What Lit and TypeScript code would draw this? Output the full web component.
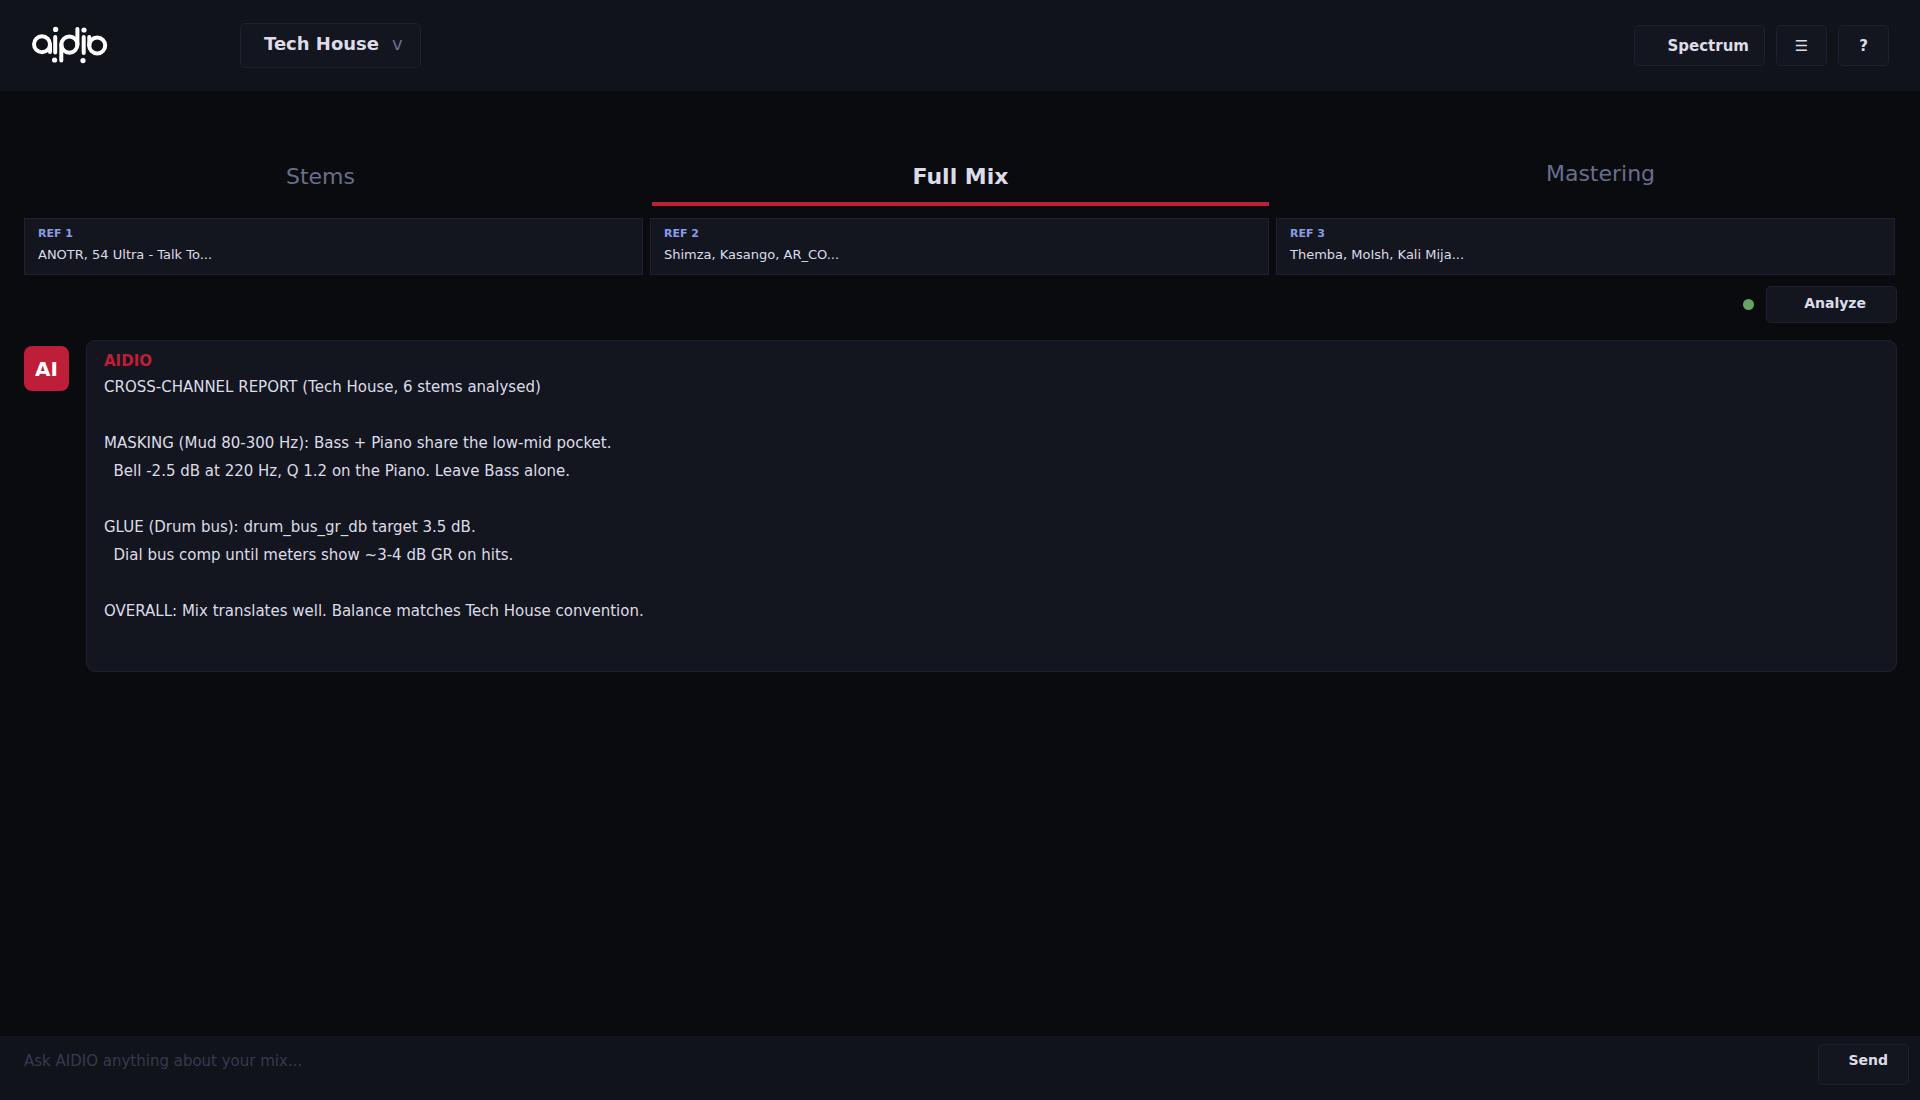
import { LitElement, html, css } from "lit";
import { customElement, state } from "lit/decorators.js";

interface Tab {
  id: string;
  label: string;
  plain?: boolean;
}

const TABS: Tab[] = [
  { id: "stems", label: "Stems" },
  { id: "mix", label: "Full Mix" },
  { id: "mastering", label: "Mastering", plain: true },
];

const REFERENCES = [
  { label: "REF 1", title: "ANOTR, 54 Ultra - Talk To..." },
  { label: "REF 2", title: "Shimza, Kasango, AR_CO..." },
  { label: "REF 3", title: "Themba, MoIsh, Kali Mija..." },
];

const REPORT = `CROSS-CHANNEL REPORT (Tech House, 6 stems analysed)

MASKING (Mud 80-300 Hz): Bass + Piano share the low-mid pocket.
  Bell -2.5 dB at 220 Hz, Q 1.2 on the Piano. Leave Bass alone.

GLUE (Drum bus): drum_bus_gr_db target 3.5 dB.
  Dial bus comp until meters show ~3-4 dB GR on hits.

OVERALL: Mix translates well. Balance matches Tech House convention.`;

@customElement("app-root")
export class AppRoot extends LitElement {
  @state() private activeTab = "mix";

  static styles = css`
    :host {
      --page: #0a0b0e;
      --bar: #10131a;
      --card: #14161f;
      --line: #1e2030;
      --text: #dcdce8;
      --muted: #696e8c;
      --accent: #be1e37;
      display: flex;
      flex-direction: column;
      min-height: 100vh;
      background: var(--page);
      color: var(--text);
      font-family: "DejaVu Sans", sans-serif;
      font-size: 15px;
    }
    * {
      box-sizing: border-box;
    }
    button,
    input {
      font: inherit;
      color: inherit;
      margin: 0;
    }
    .header {
      display: flex;
      align-items: center;
      height: 91px;
      padding: 0 31px;
      background: var(--bar);
    }
    .logo {
      display: block;
      width: 77px;
      height: 39px;
      margin-right: 132px;
    }
    .btn {
      display: flex;
      align-items: center;
      justify-content: flex-end;
      height: 41px;
      border: 1px solid var(--line);
      border-radius: 5px;
      background: var(--card);
      font-weight: bold;
      cursor: pointer;
    }
    .genre {
      height: 45px;
      gap: 13px;
      padding: 0 17px 4px 23px;
      font-size: 18px;
    }
    .chevron {
      color: var(--muted);
      font-weight: normal;
    }
    .tools {
      display: flex;
      gap: 11px;
      margin-left: auto;
    }
    .wide {
      width: 131px;
      padding: 0 15px;
    }
    .square {
      width: 51px;
      justify-content: center;
      padding: 0;
    }
    .tabs {
      display: grid;
      grid-template-columns: repeat(3, 1fr);
      padding-top: 59px;
    }
    .tab {
      height: 56px;
      margin: 0 11px 0 12px;
      padding: 0;
      border: 0;
      border-bottom: 4px solid transparent;
      background: none;
      color: var(--muted);
      font-size: 22px;
      cursor: pointer;
    }
    .tab.plain {
      border-bottom-width: 10px;
    }
    .tab.active {
      border-bottom-color: var(--accent);
      color: var(--text);
      font-weight: bold;
    }
    .refs {
      display: grid;
      grid-template-columns: repeat(3, 1fr);
      gap: 7px;
      padding: 12px 25px 0 24px;
    }
    .ref {
      height: 57px;
      padding: 7px 13px 0;
      border: 1px solid var(--line);
      background: var(--card);
    }
    .ref-label {
      color: #8c9be6;
      font-size: 11px;
      font-weight: bold;
      line-height: 16px;
    }
    .ref-title {
      font-size: 13px;
      line-height: 26px;
    }
    .status {
      display: flex;
      align-items: center;
      justify-content: flex-end;
      gap: 12px;
      padding: 11px 23px 17px;
    }
    .dot {
      width: 11px;
      height: 11px;
      border-radius: 50%;
      background: #64a564;
    }
    .analyze {
      height: 37px;
      padding: 0 30px 3px;
      font-size: 14px;
    }
    .message {
      display: flex;
      align-items: flex-start;
      gap: 17px;
      padding: 0 23px 0 24px;
    }
    .avatar {
      display: grid;
      place-items: center;
      flex: none;
      width: 45px;
      height: 45px;
      margin-top: 6px;
      border-radius: 8px;
      background: var(--accent);
      color: #fff;
      font-size: 20px;
      font-weight: bold;
    }
    .bubble {
      flex: 1;
      padding: 8px 17px 46px;
      border: 1px solid var(--line);
      border-radius: 9px;
      background: var(--card);
    }
    .author {
      color: var(--accent);
      font-weight: bold;
      line-height: 24px;
    }
    .report {
      margin: 0;
      font-family: inherit;
      line-height: 28px;
      white-space: pre-wrap;
    }
    .composer {
      display: flex;
      align-items: flex-start;
      gap: 24px;
      height: 64px;
      margin-top: auto;
      padding: 8px 11px 0 24px;
      background: var(--bar);
    }
    .prompt {
      flex: 1;
      height: 34px;
      padding: 0;
      border: 0;
      outline: 0;
      background: none;
    }
    .prompt::placeholder {
      color: #373a50;
      opacity: 1;
    }
    .send {
      width: 91px;
      padding: 0 20px 9px;
      font-size: 14px;
    }
  `;

  private renderLogo() {
    return html`<svg class="logo" viewBox="0 0 77 39" role="img" aria-label="aidio" fill="none" stroke="#fff" stroke-width="4" stroke-linecap="round">
      <circle cx="11" cy="18.300" r="8" />
      <path d="M19 18.300V26M24.200 11V26.500M30.300 34.500V18.600M46.400 3V18.600M52.700 11V27M58.300 11V19.500" />
      <circle cx="38.400" cy="18.600" r="8.050" />
      <circle cx="66.200" cy="19.500" r="8" />
      <g fill="#fff" stroke="none">
        <circle cx="24.600" cy="3.400" r="2.600" />
        <circle cx="23.600" cy="34" r="2.600" />
        <circle cx="53" cy="4" r="2.600" />
        <circle cx="52" cy="34.600" r="2.600" />
      </g>
    </svg>`;
  }

  render() {
    return html`
      <header class="header">
        ${this.renderLogo()}
        <button class="btn genre" aria-haspopup="listbox">Tech House <span class="chevron">v</span></button>
        <div class="tools">
          <button class="btn wide">Spectrum</button>
          <button class="btn square">☰</button>
          <button class="btn square">?</button>
        </div>
      </header>
      <nav class="tabs">
        ${TABS.map(
          (tab) => html`<button
            class="tab ${tab.plain ? "plain" : ""} ${tab.id === this.activeTab ? "active" : ""}"
            @click=${() => (this.activeTab = tab.id)}
          >${tab.label}</button>`
        )}
      </nav>
      <section class="refs">
        ${REFERENCES.map(
          (ref) => html`<div class="ref">
            <div class="ref-label">${ref.label}</div>
            <div class="ref-title">${ref.title}</div>
          </div>`
        )}
      </section>
      <div class="status">
        <span class="dot"></span>
        <button class="btn wide analyze">Analyze</button>
      </div>
      <article class="message">
        <div class="avatar">AI</div>
        <div class="bubble">
          <div class="author">AIDIO</div>
          <pre class="report">${REPORT}</pre>
        </div>
      </article>
      <form class="composer" @submit=${(e: Event) => e.preventDefault()}>
        <input class="prompt" type="text" aria-label="Message" placeholder="Ask AIDIO anything about your mix..." />
        <button class="btn send" type="submit">Send</button>
      </form>
    `;
  }
}
